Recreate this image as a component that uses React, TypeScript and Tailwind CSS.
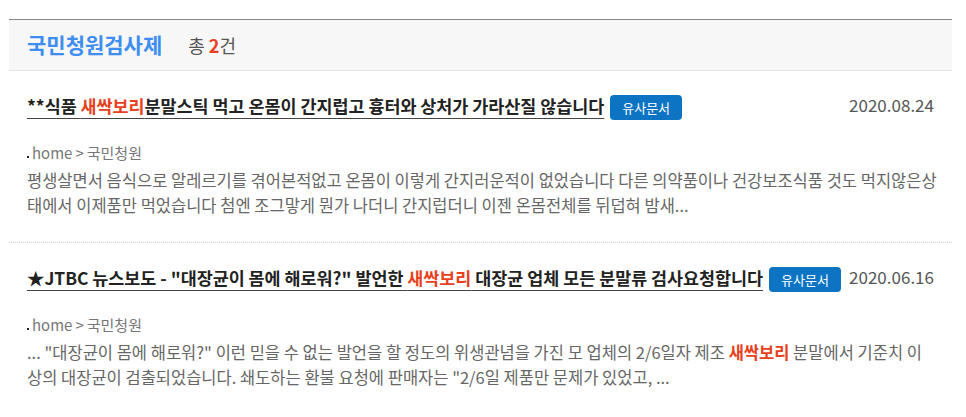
const font = { fontFamily: '"Noto Sans CJK KR", "Noto Sans", sans-serif' }

function Hl({ children }: { children: React.ReactNode }) {
  return <span className="text-[#e8401c]">{children}</span>
}

function Item({
  title,
  date,
  desc,
  last,
}: {
  title: React.ReactNode
  date: string
  desc: React.ReactNode
  last?: boolean
}) {
  return (
    <div className={last ? 'px-[18px] pt-[20px] pb-[20px]' : 'px-[18px] pt-[20px] pb-[24px] border-b border-dotted border-[#d4d4d4]'}>
      <div className="flex items-start justify-between gap-[4px]">
        <div className="flex items-center gap-[6px]">
          <a className="text-[17.4px] font-bold text-[#222] underline underline-offset-[5px] decoration-[1px] decoration-[#444] leading-[28px] whitespace-nowrap">
            {title}
          </a>
          <span className="shrink-0 inline-flex items-center h-[25px] px-[12px] mt-[4px] rounded-[4px] bg-[#0c74c3] text-white text-[13px]">
            유사문서
          </span>
        </div>
        <div className="shrink-0 w-[87px] text-right text-[17px] text-[#555] leading-[28px]">{date}</div>
      </div>
      <div className="mt-[22px] flex items-end text-[15px] text-[#777] leading-[22px]">
        <span className="w-[2px] h-[2px] bg-[#222] mb-[6px] mr-[3px]"></span>
        <span>home</span>
        <span className="mx-[3px]">&gt;</span>
        <span>국민청원</span>
      </div>
      <p className="mt-[4px] -mr-[5px] text-[16.5px] text-[#666] leading-[25px]">{desc}</p>
    </div>
  )
}

export default function App() {
  return (
    <div className="bg-white w-[966px] h-[417px] pt-[19px]" style={font}>
      <div className="ml-[9px] w-[943px]">
        <div className="h-[52px] bg-[#f7f7f7] border-t border-[#888] border-b border-b-[#e4e4e4] flex items-center px-[18px]">
          <h2 className="text-[21px] font-bold text-[#3d8ef0]">국민청원검사제</h2>
          <span className="ml-[26px] text-[18px] text-[#555]">
            총 <b className="text-[#e8401c]">2</b>건
          </span>
        </div>
        <Item
          title={
            <>
              **식품 <Hl>새싹보리</Hl>분말스틱 먹고 온몸이 간지럽고 흉터와 상처가 가라산질 않습니다
            </>
          }
          date="2020.08.24"
          desc="평생살면서 음식으로 알레르기를 겪어본적없고 온몸이 이렇게 간지러운적이 없었습니다 다른 의약품이나 건강보조식품 것도 먹지않은상태에서 이제품만 먹었습니다 첨엔 조그맣게 뭔가 나더니 간지럽더니 이젠 온몸전체를 뒤덥혀 밤새..."
        />
        <Item
          last
          title={
            <>
              ★JTBC 뉴스보도 - "대장균이 몸에 해로워?" 발언한 <Hl>새싹보리</Hl> 대장균 업체 모든 분말류 검사요청합니다
            </>
          }
          date="2020.06.16"
          desc={
            <>
              ... "대장균이 몸에 해로워?" 이런 믿을 수 없는 발언을 할 정도의 위생관념을 가진 모 업체의 2/6일자 제조{' '}
              <b className="text-[#e8401c]">새싹보리</b> 분말에서 기준치 이
              <br />
              상의 대장균이 검출되었습니다. 쇄도하는 환불 요청에 판매자는 "2/6일 제품만 문제가 있었고, ...
            </>
          }
        />
      </div>
    </div>
  )
}
